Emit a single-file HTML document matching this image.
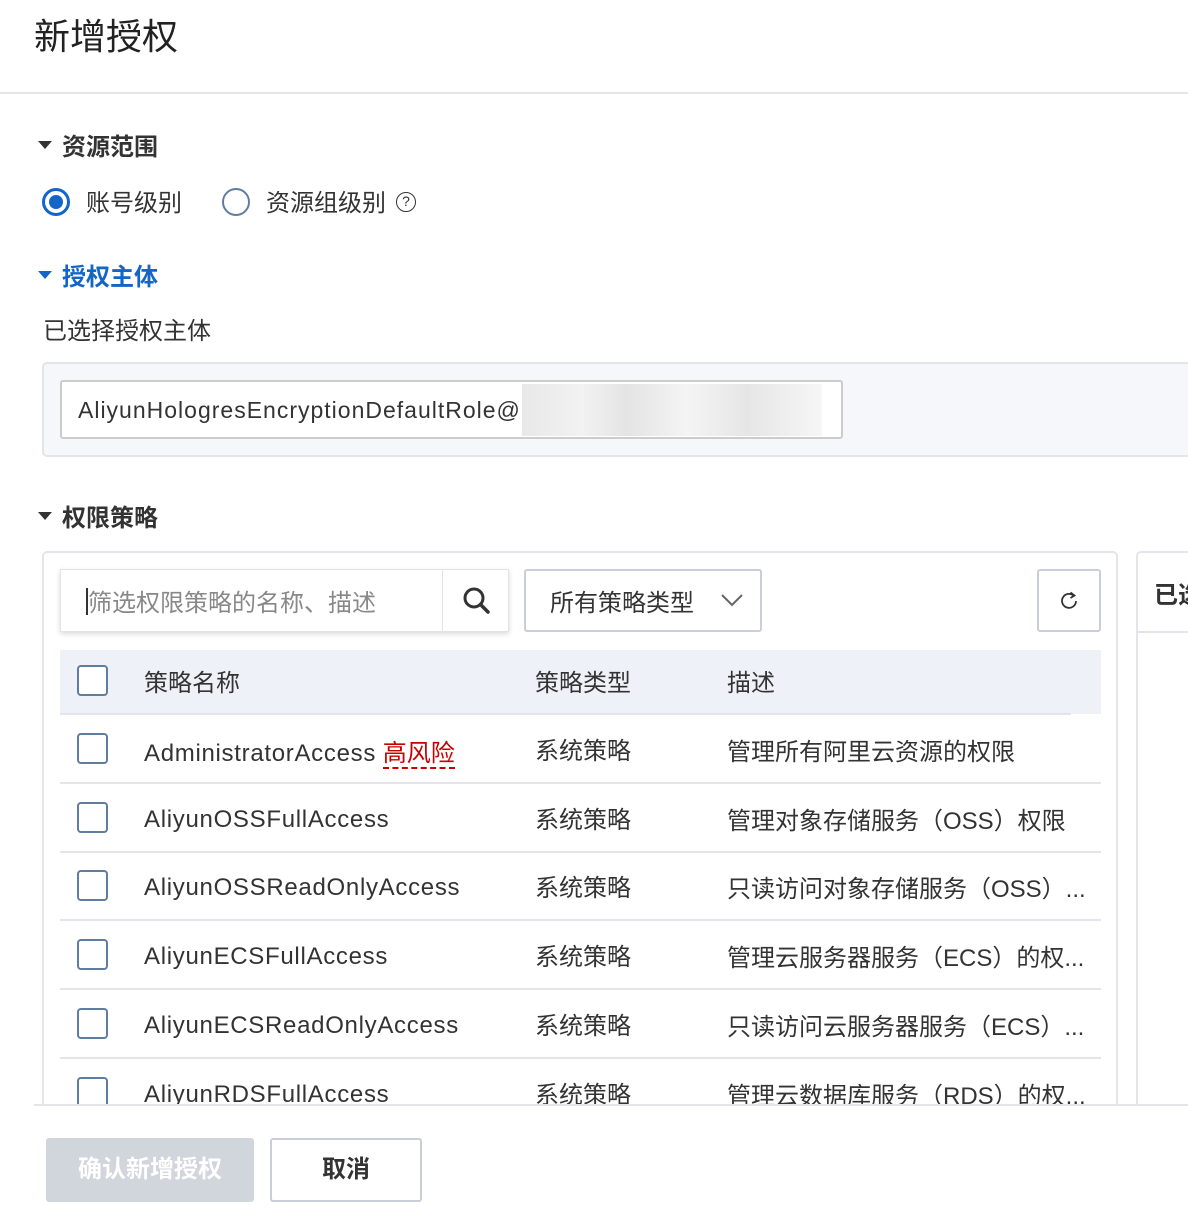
<!DOCTYPE html>
<html><head><meta charset="utf-8"><style>
*{margin:0;padding:0;box-sizing:border-box}
body{width:1188px;height:1220px;overflow:hidden;background:#fff;font-family:"Liberation Sans","Noto Sans CJK SC",sans-serif;color:#333;position:relative}
.a{position:absolute;white-space:nowrap}
.cb{position:absolute;left:77px;width:31px;height:31px;border:2px solid #5f7d9f;border-radius:4px;background:#fff}
.t{font-size:24px;color:#333}
.l{letter-spacing:0.7px}
.line{position:absolute;left:60px;width:1041px;height:2px;background:#e3e5ea}
</style></head><body>
<div class="a" style="left:34px;top:8px;font-size:36px;color:#222">新增授权</div>
<div class="a" style="left:0;top:92px;width:1188px;height:2px;background:#e5e5e5"></div>

<div class="a" style="left:38px;top:141px;width:0;height:0;border-left:7px solid transparent;border-right:7px solid transparent;border-top:8px solid #333"></div>
<div class="a" style="left:62px;top:127px;font-size:24px;font-weight:bold;color:#333">资源范围</div>

<div class="a" style="left:42px;top:188px;width:28px;height:28px;border:3px solid #1465c8;border-radius:50%"></div>
<div class="a" style="left:49px;top:195px;width:14px;height:14px;background:#1465c8;border-radius:50%"></div>
<div class="a t" style="left:86px;top:183px">账号级别</div>
<div class="a" style="left:222px;top:188px;width:28px;height:28px;border:2px solid #5f7d9f;border-radius:50%"></div>
<div class="a t" style="left:266px;top:183px">资源组级别</div>
<div class="a" style="left:396px;top:192px;width:20px;height:20px;border:1.5px solid #333;border-radius:50%;font-size:14px;text-align:center;line-height:17px">?</div>

<div class="a" style="left:38px;top:271px;width:0;height:0;border-left:7px solid transparent;border-right:7px solid transparent;border-top:8px solid #1465c8"></div>
<div class="a" style="left:62px;top:257px;font-size:24px;font-weight:bold;color:#1465c8">授权主体</div>
<div class="a t" style="left:43px;top:311px">已选择授权主体</div>

<div class="a" style="left:42px;top:362px;width:1160px;height:95px;background:#f6f7fb;border:2px solid #e3e5ea;border-radius:5px"></div>
<div class="a" style="left:60px;top:380px;width:783px;height:59px;background:#fff;border:2px solid #ccc;border-radius:3px"></div>
<div class="a" style="left:78px;top:397px;font-size:23px;letter-spacing:1px;color:#333">AliyunHologresEncryptionDefaultRole@</div>
<div class="a" style="left:522px;top:384px;width:300px;height:52px;background:linear-gradient(90deg,#e8e8e8 0,#f2f2f2 20%,#e4e4e4 35%,#f4f4f4 55%,#e6e6e6 75%,#f6f6f6 100%)"></div>

<div class="a" style="left:38px;top:512px;width:0;height:0;border-left:7px solid transparent;border-right:7px solid transparent;border-top:8px solid #333"></div>
<div class="a" style="left:62px;top:498px;font-size:24px;font-weight:bold;color:#333">权限策略</div>

<div class="a" style="left:42px;top:551px;width:1076px;height:600px;border:2px solid #e3e5ea;border-radius:5px"></div>
<div class="a" style="left:1136px;top:551px;width:80px;height:600px;border:2px solid #e3e5ea;border-radius:5px"></div>
<div class="a" style="left:1137px;top:631px;width:60px;height:2px;background:#e3e5ea"></div>
<div class="a t" style="left:1154px;top:575px;font-weight:bold">已选</div>

<div class="a" style="left:60px;top:569px;width:449px;height:63px;background:#fff;border:1px solid #e3e3e3;box-shadow:0 2px 5px rgba(0,0,0,.15)"></div>
<div class="a" style="left:442px;top:570px;width:1px;height:61px;background:#e3e3e3"></div>
<div class="a" style="left:86px;top:588px;width:2px;height:27px;background:#333"></div>
<div class="a" style="left:88px;top:583px;font-size:24px;color:#888">筛选权限策略的名称、描述</div>
<svg class="a" style="left:460px;top:584px" width="32" height="32" viewBox="0 0 32 32"><circle cx="14" cy="14" r="9" fill="none" stroke="#333" stroke-width="3"/><path d="M20.5 20.5 L28 28" stroke="#333" stroke-width="3.5" stroke-linecap="round"/></svg>

<div class="a" style="left:524px;top:569px;width:238px;height:63px;border:2px solid #c9ced8;border-radius:3px"></div>
<div class="a t" style="left:550px;top:583px">所有策略类型</div>
<svg class="a" style="left:719px;top:590px" width="26" height="20" viewBox="0 0 26 20"><path d="M3 5 L13 15 L23 5" fill="none" stroke="#666" stroke-width="2"/></svg>

<div class="a" style="left:1037px;top:569px;width:64px;height:63px;border:2px solid #c9ced8;border-radius:3px"></div>
<svg class="a" style="left:1058px;top:590px" width="22" height="22" viewBox="0 0 22 22"><path d="M15.5 5.5 A7 7 0 1 0 18 11" fill="none" stroke="#333" stroke-width="1.8"/><path d="M12.5 2.5 L16.5 5.5 L12.5 8" fill="none" stroke="#333" stroke-width="1.8"/></svg>

<div class="a" style="left:60px;top:650px;width:1041px;height:64px;background:#eef1f8"></div>
<div class="a" style="left:60px;top:713px;width:1011px;height:2px;background:#e3e5ea"></div>
<div class="cb" style="top:665px"></div>
<div class="a t" style="left:144px;top:663px">策略名称</div>
<div class="a t" style="left:535px;top:663px">策略类型</div>
<div class="a t" style="left:727px;top:663px">描述</div>

<div class="cb" style="top:733px"></div>
<div class="a t" style="left:144px;top:733px"><span class="l">AdministratorAccess</span> <span style="color:#c80000;border-bottom:2px dashed #c80000">高风险</span></div>
<div class="a t" style="left:535px;top:731px">系统策略</div>
<div class="a t" style="left:727px;top:732px">管理所有阿里云资源的权限</div>
<div class="line" style="top:782px"></div>

<div class="cb" style="top:802px"></div>
<div class="a t l" style="left:144px;top:806px">AliyunOSSFullAccess</div>
<div class="a t" style="left:535px;top:800px">系统策略</div>
<div class="a t" style="left:727px;top:801px">管理对象存储服务（OSS）权限</div>
<div class="line" style="top:851px"></div>

<div class="cb" style="top:870px"></div>
<div class="a t l" style="left:144px;top:874px">AliyunOSSReadOnlyAccess</div>
<div class="a t" style="left:535px;top:868px">系统策略</div>
<div class="a t" style="left:727px;top:869px">只读访问对象存储服务（OSS）...</div>
<div class="line" style="top:919px"></div>

<div class="cb" style="top:939px"></div>
<div class="a t l" style="left:144px;top:943px">AliyunECSFullAccess</div>
<div class="a t" style="left:535px;top:937px">系统策略</div>
<div class="a t" style="left:727px;top:938px">管理云服务器服务（ECS）的权...</div>
<div class="line" style="top:988px"></div>

<div class="cb" style="top:1008px"></div>
<div class="a t l" style="left:144px;top:1012px">AliyunECSReadOnlyAccess</div>
<div class="a t" style="left:535px;top:1006px">系统策略</div>
<div class="a t" style="left:727px;top:1007px">只读访问云服务器服务（ECS）...</div>
<div class="line" style="top:1057px"></div>

<div class="cb" style="top:1077px"></div>
<div class="a t l" style="left:144px;top:1081px">AliyunRDSFullAccess</div>
<div class="a t" style="left:535px;top:1075px">系统策略</div>
<div class="a t" style="left:727px;top:1076px">管理云数据库服务（RDS）的权...</div>

<div class="a" style="left:0;top:1104px;width:1188px;height:116px;background:#fff"></div>
<div class="a" style="left:34px;top:1104px;width:1154px;height:2px;background:#e3e5ea"></div>
<div class="a" style="left:46px;top:1138px;width:208px;height:64px;background:#d1d5dc;border-radius:3px;color:#fff;font-size:24px;font-weight:bold;text-align:center;line-height:64px">确认新增授权</div>
<div class="a" style="left:270px;top:1138px;width:152px;height:64px;border:2px solid #c9ced8;border-radius:3px;color:#333;font-size:24px;font-weight:bold;text-align:center;line-height:60px">取消</div>
</body></html>
